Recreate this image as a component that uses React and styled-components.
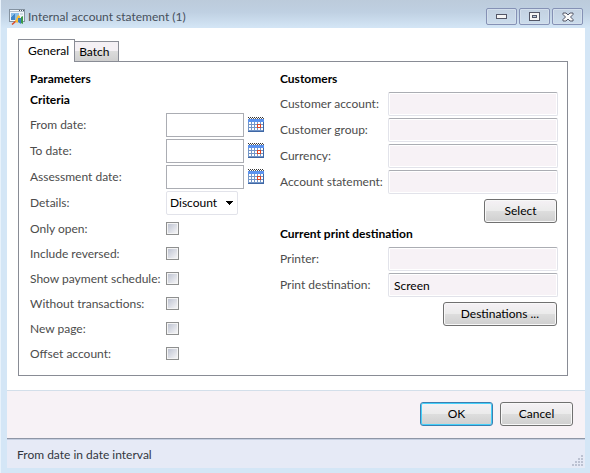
import React, { useId } from "react";
import styled, { createGlobalStyle, css } from "styled-components";

const Global = createGlobalStyle`
  *, *::before, *::after { box-sizing: border-box; }
  body { margin: 0; background: #d4e6f6; }
  body, button, input, select {
    font-family: Lato, "Open Sans", sans-serif;
    font-size: 12px;
    line-height: 16px;
  }
`;

const Window = styled.div`
  display: flex;
  flex-direction: column;
  min-height: 100vh;
  padding: 0 5px 5px 6px;
  background: linear-gradient(#bccbdb 0, #bfd0e2 12px, #d4e6f6 28px);
  border-left: 1px solid #e8f2fb;
`;

const TitleBar = styled.header`
  display: flex;
  align-items: center;
  height: 28px;
  padding: 5px 2px 0;
  color: #46505c;
`;

const Title = styled.h1`
  flex: 1;
  margin: 0 0 0 3px;
  font-size: 12px;
  font-weight: 400;
`;

const WindowControls = styled.div`
  display: flex;
  gap: 2px;
`;

const WindowButton = styled.button`
  display: grid;
  place-items: center;
  width: 31px;
  height: 17px;
  padding: 0;
  border: 1px solid #8591b5;
  border-radius: 2px;
  background: linear-gradient(#c3d1e1, #cbdcec);
  box-shadow: inset 0 0 0 1px #d3dfec;
`;

const Body = styled.main`
  flex: 1;
  display: flex;
  flex-direction: column;
  padding: 11px 17px 14px 11px;
  background: #fff;
`;

const TabList = styled.div`
  display: flex;
  align-items: flex-end;
`;

const Tab = styled.button`
  min-width: 44px;
  height: 20px;
  padding: 0 4px;
  border: 1px solid #898c95;
  border-left-width: 0;
  border-bottom: 0;
  color: #000;
  text-align: left;
  background: linear-gradient(#f4f0f4 45%, #dcdcdc 50%, #cfcfcf);
  ${(p) =>
    p.$active &&
    css`
      z-index: 1;
      min-width: 56px;
      height: 23px;
      margin-bottom: -1px;
      padding: 0 5px 0 9px;
      border-left-width: 1px;
      background: #fff;
    `}
`;

const Panel = styled.section`
  flex: 1;
  display: grid;
  grid-template-columns: 250fr 278fr;
  padding: 9px 9px 8px 11px;
  border: 1px solid #898c95;
`;

const Column = styled.div`
  min-width: 0;
`;

const Heading = styled.h2`
  margin: 0 0 5px;
  font-size: 12px;
  font-weight: 700;
  color: #000;
`;

const Fields = styled.div`
  display: grid;
  gap: 2px;
`;

const Row = styled.div`
  display: grid;
  grid-template-columns: ${(p) => p.$label}px 1fr;
  align-items: center;
  min-height: 24px;
`;

const Label = styled.label`
  color: #4c4c4c;
  white-space: nowrap;
`;

const DateGroup = styled.div`
  display: flex;
  align-items: center;
  gap: 4px;
`;

const DateInput = styled.input`
  width: 78px;
  height: 24px;
  padding: 0 4px;
  border: 1px solid #abadb3;
  background: #fff;
`;

const IconButton = styled.button`
  display: block;
  padding: 0;
  border: 0;
  background: none;
  line-height: 0;
`;

const ReadOnlyInput = styled.input`
  width: 100%;
  height: 24px;
  padding: 0 5px;
  border: 1px solid #e2e3ea;
  border-top-color: #abadb3;
  border-radius: 2px;
  background: #f7f2f6;
  box-shadow: inset 0 0 0 1px #fff;
  color: #000;
`;

const SelectWrap = styled.div`
  display: grid;
  width: 72px;
  align-items: center;
  > * { grid-area: 1 / 1; }
  > svg { justify-self: end; margin-right: 5px; pointer-events: none; z-index: 1; }
`;

const Select = styled.select`
  width: 72px;
  height: 24px;
  padding: 0 3px;
  border: 1px solid #e2e3ea;
  border-radius: 2px;
  color: #000;
  appearance: none;
  background: #fff;
`;

const CheckList = styled.div`
  margin-top: 1px;
`;

const CheckRow = styled(Row)`
  min-height: 25px;
`;

const Checkbox = styled.input`
  appearance: none;
  width: 13px;
  height: 13px;
  margin: 0;
  padding: 1px;
  border: 1px solid #8e8f8f;
  background: linear-gradient(135deg, #bfc4d2, #f4f4f6) content-box, #f4f4f4;
`;

const Actions = styled.div`
  display: flex;
  justify-content: flex-end;
  padding: 5px 1px 3px 0;
`;

const Button = styled.button`
  min-width: 73px;
  height: 24px;
  padding: 0 17px;
  border: 1px solid ${(p) => (p.$primary ? "#3c7fb1" : "#707070")};
  border-radius: 3px;
  color: #000;
  background: linear-gradient(#f5f1f5, #ebebeb 48%, #dddddd 52%, #cfcfcf);
  box-shadow: inset 0 0 0 1px ${(p) => (p.$primary ? "#45d0fa" : "#f8f8f8")};
`;

const Footer = styled.footer`
  display: flex;
  justify-content: flex-end;
  gap: 7px;
  padding: 11px 12px 12px;
  background: #f7f2f6;
  border-top: 1px solid #d3dfea;
`;

const StatusBar = styled.div`
  display: flex;
  align-items: center;
  justify-content: space-between;
  height: 30px;
  padding: 2px 2px 0 10px;
  border-top: 1px solid #8f96a6;
  background: #e6eaf6;
  box-shadow: inset 0 1px 0 #c4cee0;
  color: #32363e;
  > svg { align-self: flex-end; margin-bottom: 2px; }
`;

const Crisp = styled.svg.attrs({ shapeRendering: "crispEdges", "aria-hidden": true })`
  display: block;
  flex: none;
`;

function AppIcon() {
  return (
    <Crisp width="16" height="16" viewBox="0 0 16 16">
      <rect x="0.5" y="0.5" width="15" height="12" fill="#f3f7fb" stroke="#8492a0" />
      <path d="M1 2.5H15" stroke="#b4bfca" />
      <path d="M10 1.5h1M12 1.5h1M14 1.5h1" stroke="#4b5866" />
      <path d="M2 4h8v7H2z" fill="#8cbfe8" />
      <path d="M2 8l4-3v6H2z" fill="#4187c7" />
      <path d="M11 4h3v2h-3z" fill="#d3dde7" />
      <g shapeRendering="auto">
        <path d="M3 15.500l4-3.500" stroke="#dc4a25" strokeWidth="1.500" />
        <path d="M6 12l3-6 2 1v5l-3 2z" fill="#f8bd35" />
        <path d="M9 9h3v6l-3-2z" fill="#3d7fc0" />
        <path d="M12 8l2-1v8l-2-1z" fill="#3c9a46" />
      </g>
    </Crisp>
  );
}

function CalendarIcon() {
  return (
    <Crisp width="16" height="16" viewBox="0 0 16 16">
      <path d="M0 2h16v13H0z" fill="#7396c8" />
      <path d="M0 2h16v3H0z" fill="#5c93ee" />
      <path d="M0 14h16v1H0zM15 5h1v10h-1z" fill="#3f67a5" />
      <path d="M0 .5H16" stroke="#333" strokeDasharray="1 1" />
      <path d="M1 1.500H16" stroke="#555" strokeDasharray="1 1" />
      {[5, 8, 11].map((y) =>
        [1, 4, 7, 10, 13].map((x) => (
          <rect key={`${x}-${y}`} x={x} y={y} width="2" height="2" fill="#fff" />
        ))
      )}
      <rect x="9.5" y="7.5" width="3" height="3" fill="#fff" stroke="#df4524" />
    </Crisp>
  );
}

function MinimizeIcon() {
  return (
    <Crisp width="11" height="5" viewBox="0 0 11 5">
      <rect x="0.5" y="0.5" width="10" height="4" fill="#f4f4f4" stroke="#535666" />
    </Crisp>
  );
}

function MaximizeIcon() {
  return (
    <Crisp width="11" height="9" viewBox="0 0 11 9">
      <rect x="0.5" y="0.5" width="10" height="8" fill="#f4f4f4" stroke="#535666" />
      <rect x="3.5" y="3.5" width="4" height="2" fill="#b9cce0" stroke="#535666" />
    </Crisp>
  );
}

function CloseIcon() {
  return (
    <svg width="12" height="10" viewBox="0 0 12 10" aria-hidden="true">
      <path
        d="M1 1h3l2 2 2-2h3v1.500L8.500 5 11 7.500V9H8L6 7 4 9H1V7.500L3.500 5 1 2.500z"
        fill="#fafafa"
        stroke="#535666"
      />
    </svg>
  );
}

function SizeGrip() {
  const dots = [[9, 0], [6, 3], [9, 3], [3, 6], [6, 6], [9, 6], [0, 9], [3, 9], [6, 9], [9, 9]];
  return (
    <Crisp width="11" height="11" viewBox="0 0 11 11">
      {dots.map(([x, y]) => (
        <rect key={`${x}-${y}`} x={x} y={y} width="2" height="2" fill="#bcc2d2" />
      ))}
    </Crisp>
  );
}

function DateField({ label }) {
  const id = useId();
  return (
    <Row $label={136}>
      <Label htmlFor={id}>{label}</Label>
      <DateGroup>
        <DateInput id={id} type="text" />
        <IconButton type="button" aria-label={`${label} calendar`}>
          <CalendarIcon />
        </IconButton>
      </DateGroup>
    </Row>
  );
}

function SelectField({ label, options }) {
  const id = useId();
  return (
    <Row $label={136}>
      <Label htmlFor={id}>{label}</Label>
      <SelectWrap>
        <Select id={id}>
          {options.map((o) => (
            <option key={o}>{o}</option>
          ))}
        </Select>
        <Crisp width="7" height="4" viewBox="0 0 7 4">
          <path d="M0 0h7v1H6v1H5v1H4v1H3V3H2V2H1V1H0z" fill="#000" />
        </Crisp>
      </SelectWrap>
    </Row>
  );
}

function CheckField({ label }) {
  const id = useId();
  return (
    <CheckRow $label={136}>
      <Label htmlFor={id}>{label}</Label>
      <Checkbox id={id} type="checkbox" />
    </CheckRow>
  );
}

function ReadOnlyField({ label, value = "" }) {
  const id = useId();
  return (
    <Row $label={108}>
      <Label htmlFor={id}>{label}</Label>
      <ReadOnlyInput id={id} type="text" value={value} readOnly />
    </Row>
  );
}

const DATES = ["From date:", "To date:", "Assessment date:"];
const CHECKS = [
  "Only open:",
  "Include reversed:",
  "Show payment schedule:",
  "Without transactions:",
  "New page:",
  "Offset account:",
];
const CUSTOMER_FIELDS = ["Customer account:", "Customer group:", "Currency:", "Account statement:"];

export default function App() {
  return (
    <>
      <Global />
      <Window>
        <TitleBar>
          <AppIcon />
          <Title>Internal account statement (1)</Title>
          <WindowControls>
            <WindowButton type="button" aria-label="Minimize"><MinimizeIcon /></WindowButton>
            <WindowButton type="button" aria-label="Maximize"><MaximizeIcon /></WindowButton>
            <WindowButton type="button" aria-label="Close"><CloseIcon /></WindowButton>
          </WindowControls>
        </TitleBar>
        <Body>
          <TabList role="tablist">
            <Tab type="button" role="tab" aria-selected="true" $active>General</Tab>
            <Tab type="button" role="tab" aria-selected="false">Batch</Tab>
          </TabList>
          <Panel role="tabpanel">
            <Column>
              <Heading>Parameters</Heading>
              <Heading>Criteria</Heading>
              <Fields>
                {DATES.map((label) => <DateField key={label} label={label} />)}
                <SelectField label="Details:" options={["Discount"]} />
              </Fields>
              <CheckList>
                {CHECKS.map((label) => <CheckField key={label} label={label} />)}
              </CheckList>
            </Column>
            <Column>
              <Heading>Customers</Heading>
              <Fields>
                {CUSTOMER_FIELDS.map((label) => <ReadOnlyField key={label} label={label} />)}
              </Fields>
              <Actions>
                <Button type="button">Select</Button>
              </Actions>
              <Heading>Current print destination</Heading>
              <Fields>
                <ReadOnlyField label="Printer:" />
                <ReadOnlyField label="Print destination:" value="Screen" />
              </Fields>
              <Actions>
                <Button type="button">Destinations ...</Button>
              </Actions>
            </Column>
          </Panel>
        </Body>
        <Footer>
          <Button type="submit" $primary>OK</Button>
          <Button type="button">Cancel</Button>
        </Footer>
        <StatusBar>
          <span role="status">From date in date interval</span>
          <SizeGrip />
        </StatusBar>
      </Window>
    </>
  );
}
